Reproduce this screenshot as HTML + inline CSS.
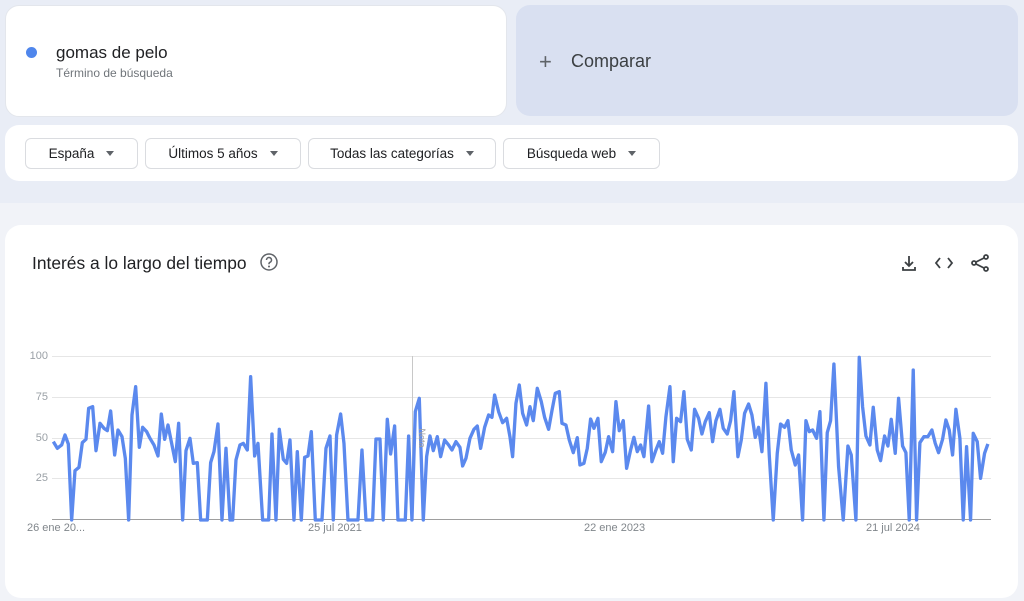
<!DOCTYPE html>
<html><head><meta charset="utf-8"><style>
*{margin:0;padding:0;box-sizing:border-box}
body{width:1024px;height:601px;overflow:hidden;background:#f1f3f8;font-family:"Liberation Sans",sans-serif;position:relative}
.band{position:absolute;left:0;top:0;width:1024px;height:203px;background:#e9edf6}
.card{position:absolute;background:#fff;border-radius:14px}
.btn{position:absolute;top:138px;height:31px;border:1px solid #dadce0;border-radius:6px;font-size:13.5px;color:#202124;display:flex;align-items:center;justify-content:center;gap:12px}
.tri{width:0;height:0;border-left:4.5px solid transparent;border-right:4.5px solid transparent;border-top:5.5px solid #5f6368}
.yl{position:absolute;left:18px;width:30px;text-align:right;font-size:11px;color:#9aa0a6}
.xl{position:absolute;top:522px;font-size:11px;color:#80868b}
</style></head><body>
<div class="band"></div>
<div class="card" style="left:5px;top:5px;width:502px;height:112px;border:1px solid #e3e6ec"></div>
<div style="position:absolute;left:26px;top:47px;width:11px;height:11px;border-radius:50%;background:#4f86ec"></div>
<div style="position:absolute;left:56px;top:43px;font-size:17px;color:#202124">gomas de pelo</div>
<div style="position:absolute;left:56px;top:66px;font-size:12px;color:#70757a">Término de búsqueda</div>
<div class="card" style="left:516px;top:5px;width:502px;height:111px;background:#d9e0f1"></div>
<div style="position:absolute;left:539px;top:49px;font-size:22px;color:#5f6368;font-weight:300">+</div>
<div style="position:absolute;left:571px;top:51px;font-size:18px;color:#3c4043">Comparar</div>
<div class="card" style="left:5px;top:125px;width:1013px;height:56px"></div>
<div class="btn" style="left:25px;width:113px">España <span class="tri"></span></div>
<div class="btn" style="left:145px;width:156px">Últimos 5 años <span class="tri"></span></div>
<div class="btn" style="left:308px;width:188px">Todas las categorías <span class="tri"></span></div>
<div class="btn" style="left:503px;width:157px">Búsqueda web <span class="tri"></span></div>
<div class="card" style="left:5px;top:225px;width:1013px;height:373px;border-radius:16px"></div>
<div style="position:absolute;left:32px;top:253px;font-size:17.4px;color:#202124">Interés a lo largo del tiempo</div>
<svg style="position:absolute;left:259px;top:252px" width="20" height="20" viewBox="0 0 20 20"><circle cx="10" cy="10" r="8" fill="none" stroke="#5f6368" stroke-width="1.5"/><path d="M7.5 8a2.5 2.5 0 1 1 3.5 2.3c-.7.3-1 .8-1 1.5v.5" fill="none" stroke="#5f6368" stroke-width="1.5"/><circle cx="10" cy="14.5" r="1" fill="#5f6368"/></svg>
<svg style="position:absolute;left:900px;top:253px" width="100" height="20" viewBox="0 0 100 20">
<g fill="none" stroke="#3c4043" stroke-width="1.8"><path d="M9 3v10M5 9l4 4 4-4M3 14v3h12v-3"/><path d="M40 5l-4 5 4 5M48 5l4 5-4 5"/><circle cx="86" cy="4" r="2"/><circle cx="74" cy="10" r="2"/><circle cx="86" cy="16" r="2"/><path d="M76 9l8-4M76 11l8 4"/></g></svg>
<svg style="position:absolute;left:0;top:0" width="1024" height="601">
<g stroke="#e6e6e6" stroke-width="1"><line x1="52" y1="356.5" x2="991" y2="356.5"/><line x1="52" y1="397.5" x2="991" y2="397.5"/><line x1="52" y1="438.5" x2="991" y2="438.5"/><line x1="52" y1="478.5" x2="991" y2="478.5"/></g>
<line x1="412.5" y1="356" x2="412.5" y2="519" stroke="#c8c8c8"/>
<line x1="52" y1="519.5" x2="991" y2="519.5" stroke="#9e9e9e"/>
<g transform="translate(0,340) scale(0.3333)"><polyline fill="none" stroke="#5b89ee" stroke-width="10" stroke-linejoin="round" points="160,305 172,325 185,315 195,285 205,312 215,540 225,392 237,382 247,308 258,298 266,205 278,200 288,332 300,250 312,265 322,272 332,213 344,345 354,270 366,290 376,355 386,540 396,225 407,140 418,322 428,262 440,275 450,295 462,315 474,348 484,222 494,298 504,255 514,305 526,365 536,250 548,540 558,332 570,295 580,370 592,368 602,540 622,540 632,368 642,335 654,252 666,540 678,325 690,540 698,540 708,360 720,315 730,310 742,330 752,110 764,348 774,310 788,540 806,540 816,282 828,540 838,268 850,358 860,370 870,300 882,540 892,335 904,540 914,352 924,348 934,275 946,540 966,540 978,325 990,288 1000,540 1010,285 1022,222 1032,310 1044,540 1074,540 1086,330 1098,540 1118,540 1128,297 1140,297 1150,540 1162,238 1172,342 1184,258 1194,540 1216,540 1226,288 1236,540 1246,215 1258,175 1270,540 1280,350 1290,288 1300,332 1312,290 1322,350 1334,300 1346,315 1356,330 1368,305 1380,322 1388,378 1398,355 1410,295 1422,268 1432,258 1442,325 1454,262 1466,225 1476,232 1484,165 1496,215 1508,248 1520,235 1530,290 1538,350 1548,190 1558,135 1568,220 1580,255 1590,200 1600,242 1612,145 1624,185 1634,232 1646,268 1656,212 1666,160 1678,155 1686,250 1698,255 1708,300 1720,338 1732,293 1740,375 1752,370 1762,325 1772,237 1782,265 1794,235 1804,365 1816,337 1826,290 1838,335 1848,185 1858,272 1870,242 1880,385 1892,330 1902,292 1912,335 1922,315 1932,350 1946,198 1956,365 1968,330 1978,305 1988,340 1998,230 2010,140 2020,365 2030,235 2042,245 2052,155 2062,298 2074,330 2084,208 2096,235 2106,282 2116,245 2128,218 2138,305 2148,242 2160,208 2170,265 2182,282 2192,242 2202,155 2214,350 2224,300 2234,220 2246,192 2256,225 2266,292 2276,262 2286,335 2298,130 2308,345 2320,540 2332,340 2342,252 2354,262 2364,242 2374,330 2386,375 2396,345 2408,540 2418,242 2428,275 2438,270 2450,295 2460,215 2472,540 2482,278 2492,242 2502,72 2516,380 2530,540 2544,318 2554,345 2568,540 2578,52 2588,200 2598,288 2610,315 2620,202 2632,330 2642,362 2654,288 2664,318 2674,238 2686,340 2696,175 2708,318 2718,338 2728,540 2740,90 2750,540 2760,308 2772,290 2784,290 2796,270 2806,310 2816,338 2828,298 2838,240 2848,270 2858,345 2868,208 2880,295 2890,540 2900,320 2912,540 2920,280 2932,305 2942,415 2954,340 2964,312"/></g>
<text x="419" y="438" font-size="9" fill="#9e9e9e" transform="rotate(90 419 438)" font-family="Liberation Sans" text-anchor="middle">Nota</text>
</svg>
<div class="yl" style="top:350px">100</div>
<div class="yl" style="top:391px">75</div>
<div class="yl" style="top:432px">50</div>
<div class="yl" style="top:472px">25</div>
<div class="xl" style="left:27px">26 ene 20...</div>
<div class="xl" style="left:308px">25 jul 2021</div>
<div class="xl" style="left:584px">22 ene 2023</div>
<div class="xl" style="left:866px">21 jul 2024</div>
</body></html>
